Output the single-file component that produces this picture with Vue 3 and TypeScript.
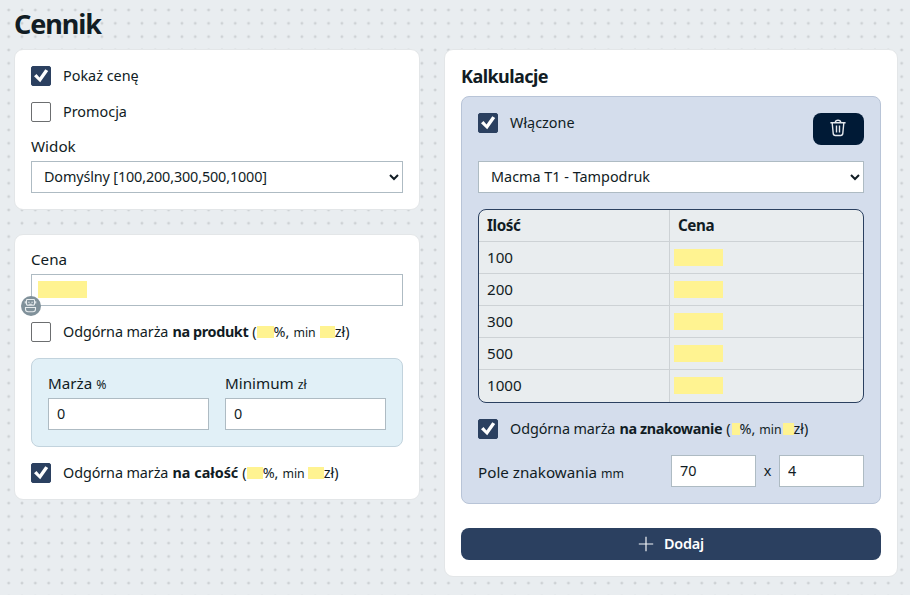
<script setup lang="ts">
import { ref, reactive } from 'vue'

const showPrice = ref(true)
const promo = ref(false)
const productMargin = ref(false)
const totalMargin = ref(true)
const calcEnabled = ref(true)
const markingMargin = ref(true)
const view = ref('Domyślny [100,200,300,500,1000]')
const marking = ref('Macma T1 - Tampodruk')
const margin = reactive({ percent: '0', minimum: '0' })
const field = reactive({ width: '70', height: '4' })
const quantities: number[] = [100, 200, 300, 500, 1000]
const tick = 'M3 10.2 5.5 8 8.5 11.4 14.3 3.2 17.2 5 9.2 16.2Z'
</script>

<template>
  <div class="page">
    <h1>Cennik</h1>
    <div class="columns">
      <div class="left">
        <section class="card">
          <label class="check">
            <input v-model="showPrice" type="checkbox" />
            <svg viewBox="0 0 20 20"><path :d="tick" /></svg>
            <span>Pokaż cenę</span>
          </label>
          <label class="check spaced">
            <input v-model="promo" type="checkbox" />
            <svg viewBox="0 0 20 20"><path :d="tick" /></svg>
            <span>Promocja</span>
          </label>
          <div class="label view-label">Widok</div>
          <select v-model="view" class="control long"><option>{{ view }}</option></select>
        </section>

        <section class="card">
          <div class="label price-label">Cena</div>
          <div class="control price">
            <i class="mask"></i>
            <span class="robot">
              <svg viewBox="0 0 20 20">
                <rect x="5.5" y="3.5" width="8" height="5.6" rx="0.8" />
                <path d="M4.3 5.2v2.2M14.7 5.2v2.2M7.2 6.3h1.4M10.4 6.3h1.4M8.2 8.2h2.6" />
                <path d="M4.5 11.5h10v1.8q0 2.4-2.6 2.4h-4.8q-2.6 0-2.6-2.4z" />
              </svg>
            </span>
          </div>
          <label class="check spaced">
            <input v-model="productMargin" type="checkbox" />
            <svg viewBox="0 0 20 20"><path :d="tick" /></svg>
            <span class="rule"><em>Odgórna marża</em><b class="tight">na produkt</b>(<i class="gap product-a"></i>%,<small>min</small><i class="gap product-b"></i>zł)</span>
          </label>
          <div class="margins">
            <div>
              <div class="label">Marża <small>%</small></div>
              <input v-model="margin.percent" class="control" type="text" />
            </div>
            <div>
              <div class="label">Minimum <small>zł</small></div>
              <input v-model="margin.minimum" class="control" type="text" />
            </div>
          </div>
          <label class="check">
            <input v-model="totalMargin" type="checkbox" />
            <svg viewBox="0 0 20 20"><path :d="tick" /></svg>
            <span class="rule"><em>Odgórna marża</em><b>na całość</b>(<i class="gap total-a"></i>%,<small>min</small><i class="gap total-b"></i>zł)</span>
          </label>
        </section>
      </div>

      <section class="card">
        <h2>Kalkulacje</h2>
        <div class="calc">
          <div class="calc-head">
            <label class="check">
              <input v-model="calcEnabled" type="checkbox" />
              <svg viewBox="0 0 20 20"><path :d="tick" /></svg>
              <span>Włączone</span>
            </label>
            <button class="delete" type="button" aria-label="Usuń">
              <svg viewBox="0 0 16 18"><path d="M.4 3.7h15.2M5.3 3.4Q5.5 1.3 8 1.3t2.7 2.1M2.2 4l1 10.4q.2 2.1 2.1 2.1h5.4q1.9 0 2.1-2.1l1-10.4M6.5 6.6v7M9.5 6.6v7" /></svg>
            </button>
          </div>
          <select v-model="marking" class="control"><option>{{ marking }}</option></select>
          <div class="table">
            <div class="row head"><span>Ilość</span><span>Cena</span></div>
            <div v-for="q in quantities" :key="q" class="row">
              <span>{{ q }}</span><span><i class="mask"></i></span>
            </div>
          </div>
          <label class="check">
            <input v-model="markingMargin" type="checkbox" />
            <svg viewBox="0 0 20 20"><path :d="tick" /></svg>
            <span class="rule"><em>Odgórna marża</em><b class="tight">na znakowanie</b>(<i class="gap mark-a"></i>%,<small>min</small><i class="gap mark-b"></i>zł)</span>
          </label>
          <div class="field">
            <div class="label">Pole znakowania <small>mm</small></div>
            <input v-model="field.width" class="control" type="text" />
            <span class="times">x</span>
            <input v-model="field.height" class="control" type="text" />
          </div>
        </div>
        <button class="add" type="button">
          <svg viewBox="0 0 16 16"><path d="M8 .8v14.4M.8 8h14.4" /></svg>
          Dodaj
        </button>
      </section>
    </div>
  </div>
</template>

<style>
body {
  margin: 0;
  background: #e9edf0;
}
</style>

<style scoped>
* {
  box-sizing: border-box;
}
.page {
  min-height: 595px;
  padding: 0 12px 0 14px;
  color: #111c24;
  font: 14.4px/20px "Noto Sans", sans-serif;
  background: radial-gradient(circle, #cdd1d4 1.1px, transparent 1.7px) 2px 3.33px / 13.333px 13.333px;
}
h1 {
  height: 49px;
  margin: 0;
  font-size: 27px;
  line-height: 48px;
  letter-spacing: -1.1px;
}
h2 {
  height: 30px;
  margin: 0;
  font-size: 18px;
  line-height: 20px;
  letter-spacing: -0.55px;
}
.columns {
  display: grid;
  grid-template-columns: 406px 454px;
  column-gap: 24px;
  align-items: start;
}
.left {
  display: grid;
  row-gap: 24px;
}
.card {
  padding: 16px;
  border: 1px solid #e3e6e8;
  border-radius: 9px;
  background: #fff;
}
.check {
  display: grid;
  grid-template-columns: 20px 1fr;
  column-gap: 12px;
  height: 20px;
  white-space: nowrap;
}
.check.spaced {
  margin-top: 16px;
}
.check input,
.check svg {
  grid-area: 1 / 1;
  width: 20px;
  height: 20px;
  margin: 0;
}
.check input {
  appearance: none;
  border: 1px solid #6c6e70;
  border-radius: 2px;
  background: #fff;
}
.check input:checked {
  border-color: #2b4060;
  background: #2b4060;
}
.check svg {
  display: none;
  fill: #fff;
}
.check input:checked + svg {
  display: block;
}
.rule {
  display: flex;
}
.rule em {
  width: 109.5px;
  font-style: normal;
  letter-spacing: -0.1px;
}
.rule b {
  margin-right: 4px;
}
.rule .tight {
  letter-spacing: -0.38px;
}
.rule small {
  margin-left: 4px;
}
small {
  font-size: 12.3px;
  line-height: 1;
}
.rule small {
  line-height: 21px;
}
.gap {
  flex: none;
  height: 12px;
  margin-top: 4px;
  background: #fff391;
}
.product-a { width: 17px; }
.product-b { width: 15px; margin-left: 4px; }
.total-a { width: 16px; }
.total-b { width: 16px; margin-left: 3px; }
.mark-a { width: 8px; margin-left: 1px; }
.mark-b { width: 11px; margin-left: 1px; }
.label {
  height: 20px;
  font-size: 15.2px;
  line-height: 19px;
}
.view-label {
  margin: 15px 0 4px;
}
.price-label {
  height: 19px;
  margin-bottom: 4px;
  line-height: 17px;
}
.control {
  display: block;
  width: 100%;
  height: 32px;
  margin: 0;
  padding: 0 8px 1px;
  border: 1px solid #aebbc3;
  border-radius: 0;
  outline: 0;
  background-color: #fff;
  color: #111c24;
  font: inherit;
}
.long {
  letter-spacing: -0.14px;
}
.mask {
  display: block;
  width: 49px;
  height: 17px;
  background: #fff391;
}
.price {
  position: relative;
  padding: 6px;
}
.robot {
  position: absolute;
  left: -11px;
  bottom: -11px;
  width: 20px;
  height: 20px;
  border-radius: 50%;
  background: #80919a;
}
.robot svg {
  display: block;
  fill: none;
  stroke: #e7ecee;
  stroke-width: 1.1;
}
.margins {
  display: grid;
  grid-template-columns: 161px 161px;
  column-gap: 16px;
  height: 89px;
  margin: 16px 0;
  padding: 15px 16px;
  border: 1px solid #c2d3dd;
  border-radius: 8px;
  background: #e1f0f7;
}
.margins .label {
  margin-bottom: 4px;
}
.calc {
  padding: 16px;
  border: 1px solid #b8c4d7;
  border-radius: 8px;
  background: #d4ddec;
}
.calc-head {
  display: flex;
  justify-content: space-between;
  margin-bottom: 16px;
}
.delete {
  display: grid;
  place-items: center;
  width: 51px;
  height: 32px;
  padding: 0 1px 2px 0;
  border: 0;
  border-radius: 8px;
  background: #001a36;
}
.delete svg {
  width: 16px;
  height: 18px;
  fill: none;
  stroke: #e4e8ed;
  stroke-width: 1.4;
}
.table {
  height: 194px;
  margin: 16px 0;
  overflow: hidden;
  border: 1px solid #2b4060;
  border-radius: 8px;
  background: #e9edef;
  font-size: 15.2px;
}
.row {
  display: grid;
  grid-template-columns: 190px 1fr;
  height: 32px;
  border-top: 1px solid #cdd2d5;
  line-height: 31px;
}
.row:last-child {
  height: 33px;
}
.row.head {
  height: 31px;
  border-top: 0;
  font-weight: 700;
  letter-spacing: -0.4px;
}
.row span {
  padding-left: 8px;
}
.row span + span {
  border-left: 1px solid #cdd2d5;
}
.row .mask {
  margin: 7px 0 0 -4px;
}
.field {
  display: grid;
  grid-template-columns: 193px 85px 23px 85px;
  height: 32px;
  margin-top: 16px;
}
.field .label {
  line-height: 35px;
}
.times {
  line-height: 31px;
  text-align: center;
}
.add {
  display: flex;
  align-items: center;
  justify-content: center;
  gap: 10px;
  width: 100%;
  height: 32px;
  margin-top: 24px;
  padding: 0;
  border: 0;
  border-radius: 8px;
  background: #2b4060;
  color: #fff;
  font: 600 14.4px/20px "Noto Sans", sans-serif;
  letter-spacing: -0.2px;
}
.add svg {
  width: 16px;
  height: 16px;
  fill: none;
  stroke: #f2f4f7;
  stroke-width: 1.2;
}
</style>
